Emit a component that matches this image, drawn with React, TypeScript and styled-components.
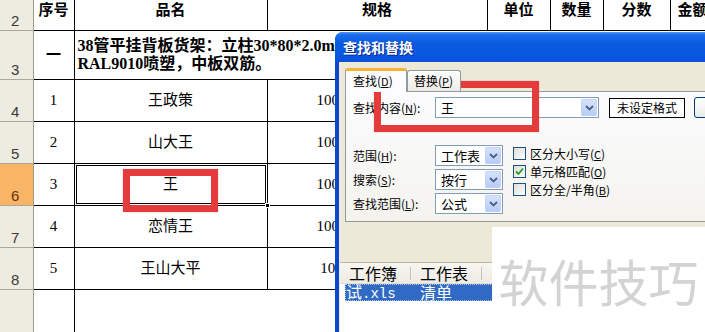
import React from "react";
import styled, { createGlobalStyle } from "styled-components";

const GlobalStyle = createGlobalStyle`
  html, body { margin: 0; padding: 0; background: #fff; }
  body { overflow: hidden; }
`;

const Page = styled.div`
  position: relative;
  width: 705px;
  height: 332px;
  overflow: hidden;
  background: #fff;
`;

/* ---------- spreadsheet ---------- */

const Sheet = styled.table`
  border-collapse: collapse;
  table-layout: fixed;
  width: 775px;
  font-family: "Liberation Serif", "Noto Sans CJK SC", serif;
  color: #000;
`;

const Col = styled.col<{ $w: number }>`
  width: ${(p) => p.$w}px;
`;

const Row = styled.tr<{ $h: number }>`
  height: ${(p) => p.$h}px;
`;

const RowHead = styled.th<{ $active?: boolean }>`
  padding: 0 0 1px 11px;
  text-align: left;
  vertical-align: bottom;
  font: 400 15px/16px "Liberation Sans", sans-serif;
  color: ${(p) => (p.$active ? "#6b3210" : "#3a3a3a")};
  background: ${(p) => (p.$active ? "#F8B566" : "#EEECE1")};
  border-right: 1px solid #9d9b8e;
  border-bottom: 1px solid #aaa898;
`;

const HeadCell = styled.td`
  border: 1px solid #000;
  border-top: none;
  padding: 0;
  text-align: center;
  vertical-align: top;
  font-family: "Noto Sans CJK SC", sans-serif;
  font-weight: 700;
  font-size: 15px;
  line-height: 18px;
  white-space: nowrap;
  overflow: hidden;
`;

const Cell = styled.td<{ $selected?: boolean; $bold?: boolean }>`
  position: relative;
  border: 1px solid #000;
  padding: 0;
  text-align: center;
  vertical-align: middle;
  font-size: 15px;
  line-height: 18px;
  font-weight: ${(p) => (p.$bold ? 700 : 400)};
  white-space: nowrap;
  overflow: ${(p) => (p.$selected ? "visible" : "hidden")};
  box-shadow: ${(p) =>
    p.$selected ? "inset 0 0 0 1px #fff, inset 0 0 0 2px #000" : "none"};
  &::after {
    content: "";
    display: ${(p) => (p.$selected ? "block" : "none")};
    position: absolute;
    right: -3px;
    bottom: -3px;
    width: 5px;
    height: 5px;
    background: #000;
    border: 1px solid #fff;
    box-sizing: border-box;
  }
`;

const TitleCell = styled.td`
  border: 1px solid #000;
  padding: 0 0 0 3px;
  text-align: left;
  vertical-align: middle;
  font-family: "Liberation Serif", "Noto Sans CJK SC", serif;
  font-weight: 700;
  font-size: 16px;
  line-height: 18px;
  white-space: nowrap;
  overflow: hidden;
`;

const BlankCell = styled.td`
  border: 1px solid #000;
  padding: 0;
`;

/* ---------- dialog ---------- */

const Dialog = styled.div`
  position: absolute;
  left: 335px;
  top: 32px;
  width: 420px;
  height: 312px;
  display: flex;
  flex-direction: column;
  background: #0A47CF;
  border-radius: 8px 8px 0 0;
  overflow: hidden;
  font-family: "Noto Sans CJK SC", "Liberation Sans", sans-serif;
  font-size: 12px;
  color: #000;
`;

const TitleBar = styled.div`
  height: 30px;
  flex: none;
  display: flex;
  align-items: center;
  padding-left: 8px;
  background: linear-gradient(
    #4a97f8 0%,
    #1b6bea 10%,
    #0a5ae0 40%,
    #0858e2 75%,
    #0b4fd6 100%
  );
  color: #fff;
  font-weight: 700;
  font-size: 14px;
  text-shadow: 1px 1px 0 #0c2a8a;
`;

const Body = styled.div`
  flex: 1;
  margin-left: 4px;
  background: #ECE9D8;
  display: flex;
  flex-direction: column;
  padding-top: 6px;
`;

const Tabs = styled.div`
  display: flex;
  align-items: flex-end;
  height: 23px;
  margin-left: 6px;
  position: relative;
  z-index: 1;
`;

const Tab = styled.div<{ $active?: boolean }>`
  box-sizing: border-box;
  width: ${(p) => (p.$active ? 62 : 54)}px;
  height: ${(p) => (p.$active ? 24 : 21)}px;
  margin-bottom: ${(p) => (p.$active ? -1 : 0)}px;
  padding: ${(p) => (p.$active ? "1px 0 0 7px" : "1px 0 0 6px")};
  border: 1px solid #919B9C;
  border-bottom: none;
  border-top: ${(p) => (p.$active ? "3px solid #F7B338" : "1px solid #919B9C")};
  border-radius: 3px 3px 0 0;
  background: ${(p) =>
    p.$active ? "#FCFCFE" : "linear-gradient(#ffffff, #ECEBE6)"};
  font-size: 12px;
  line-height: 18px;
  white-space: nowrap;
`;

const Panel = styled.div`
  box-sizing: border-box;
  width: 400px;
  height: 131px;
  margin-left: 6px;
  border: 1px solid #919B9C;
  background: linear-gradient(#FCFCFE, #F4F3EE);
  padding: 5px 0 0 7px;
`;

const FieldRow = styled.div`
  display: flex;
  align-items: center;
  height: 21px;
`;

const Label = styled.span`
  width: 82px;
  flex: none;
  white-space: nowrap;
`;

const Key = styled.span`
  text-decoration: underline;
  font-size: 11px;
`;

const Combo = styled.div<{ $w: number }>`
  box-sizing: border-box;
  width: ${(p) => p.$w}px;
  height: 21px;
  flex: none;
  display: flex;
  align-items: center;
  border: 1px solid #7F9DB9;
  background: #fff;
  padding: 1px;
`;

const ComboText = styled.span`
  flex: 1;
  padding-left: 4px;
  font-size: 13px;
  line-height: 17px;
  white-space: nowrap;
`;

const DropBtn = styled.span`
  width: 16px;
  height: 17px;
  flex: none;
  display: flex;
  align-items: center;
  justify-content: center;
  border-radius: 2px;
  background: linear-gradient(#D8E4FC, #B6CAF5);
  box-shadow: inset 0 0 0 1px #C3D3FD;
`;

const FmtButton = styled.div`
  box-sizing: border-box;
  margin-left: 10px;
  width: 76px;
  height: 20px;
  flex: none;
  border: 1px solid #000;
  background: #fff;
  display: flex;
  align-items: center;
  justify-content: center;
  font-size: 12px;
`;

const XpButton = styled.div`
  box-sizing: border-box;
  margin-left: 9px;
  width: 80px;
  height: 21px;
  flex: none;
  border: 1px solid #003C74;
  border-radius: 3px;
  background: linear-gradient(#ffffff, #ECEBE6);
`;

const Options = styled.div`
  display: flex;
  margin-top: 27px;
`;

const OptCol = styled.div`
  display: flex;
  flex-direction: column;
  gap: 3px;
`;

const CheckCol = styled.div`
  display: flex;
  flex-direction: column;
  gap: 5px;
  margin-left: 10px;
  padding-top: 2px;
`;

const CheckRow = styled.div`
  display: flex;
  align-items: center;
  height: 13px;
  gap: 4px;
  white-space: nowrap;
`;

const Box = styled.span`
  box-sizing: border-box;
  width: 13px;
  height: 13px;
  flex: none;
  border: 1px solid #1C5180;
  background: linear-gradient(135deg, #DCDCD7, #ffffff);
  display: flex;
  align-items: center;
  justify-content: center;
`;

const ResultList = styled.div`
  flex: 1;
  margin-top: 40px;
  margin-left: 1px;
  background: #fff;
  border-top: 1px solid #B9B6A6;
  display: flex;
  flex-direction: column;
  font-size: 16px;
`;

const ListHeader = styled.div`
  height: 20px;
  display: flex;
  align-items: center;
  background: linear-gradient(#F7F6F1, #EDEBE2);
  border-bottom: 1px solid #E0DDCF;
`;

const HeaderCol = styled.div<{ $w: number }>`
  position: relative;
  width: ${(p) => p.$w}px;
  flex: none;
  padding-left: 9px;
  box-sizing: border-box;
  line-height: 20px;
  color: #000;
  &::after {
    content: "";
    position: absolute;
    right: 0;
    top: 4px;
    bottom: 3px;
    width: 1px;
    background: #C7C5B2;
  }
`;

const SelRow = styled.div`
  height: 17px;
  margin-left: 5px;
  display: flex;
  align-items: center;
  background: #316AC5;
  color: #fff;
  outline: 1px dotted #a9c1ea;
  outline-offset: -1px;
`;

const SelCol = styled.div<{ $w: number }>`
  width: ${(p) => p.$w}px;
  flex: none;
  padding-left: 1px;
  line-height: 17px;
  white-space: nowrap;
`;

const Mono = styled.span`
  font-family: "Liberation Mono", monospace;
  font-size: 14px;
`;

/* ---------- overlays ---------- */

const Watermark = styled.div`
  position: absolute;
  left: 492px;
  top: 227px;
  width: 213px;
  height: 105px;
  background: #fff;
  display: flex;
  align-items: center;
  justify-content: center;
  font-family: "Noto Sans CJK SC", sans-serif;
  font-size: 50px;
  font-weight: 400;
  color: #D3D3D3;
  white-space: nowrap;
`;

const Mark = styled.div<{ $x: number; $y: number; $w: number; $h: number }>`
  position: absolute;
  left: ${(p) => p.$x}px;
  top: ${(p) => p.$y}px;
  width: ${(p) => p.$w}px;
  height: ${(p) => p.$h}px;
  box-sizing: border-box;
  border: 7px solid #E43C3C;
  box-shadow: 0 0 1px rgba(228, 60, 60, 0.6);
`;

const Chevron = () => (
  <svg width="9" height="6" viewBox="0 0 9 6">
    <polyline
      points="1,1 4.5,4.5 8,1"
      fill="none"
      stroke="#4D6185"
      strokeWidth="1.8"
    />
  </svg>
);

const Check = () => (
  <svg width="9" height="9" viewBox="0 0 9 9">
    <polyline
      points="1,4.5 3.5,7 8,1.5"
      fill="none"
      stroke="#21A121"
      strokeWidth="1.8"
    />
  </svg>
);

const items = [
  { no: "1", name: "王政策", spec: "1000*600*2000mm" },
  { no: "2", name: "山大王", spec: "1000*600*2000mm" },
  { no: "3", name: "王", spec: "1000*600*2000mm", sel: true },
  { no: "4", name: "恋情王", spec: "1000*600*2000mm" },
  { no: "5", name: "王山大平", spec: "1000*600*200mm" },
];

export default function App() {
  return (
    <Page>
      <GlobalStyle />
      <Sheet>
        <colgroup>
          <Col $w={33} />
          <Col $w={41} />
          <Col $w={193} />
          <Col $w={220} />
          <Col $w={63} />
          <Col $w={53} />
          <Col $w={67} />
          <Col $w={45} />
          <Col $w={60} />
        </colgroup>
        <tbody>
          <Row $h={30}>
            <RowHead>2</RowHead>
            <HeadCell>序号</HeadCell>
            <HeadCell>品名</HeadCell>
            <HeadCell>规格</HeadCell>
            <HeadCell>单位</HeadCell>
            <HeadCell>数量</HeadCell>
            <HeadCell>分数</HeadCell>
            <HeadCell>金额</HeadCell>
            <HeadCell />
          </Row>
          <Row $h={49}>
            <RowHead>3</RowHead>
            <Cell $bold>一</Cell>
            <TitleCell colSpan={7}>
              38管平挂背板货架：立柱30*80*2.0mm，层板1.0mm
              <br />
              RAL9010喷塑，中板双筋。
            </TitleCell>
          </Row>
          {items.map((it, i) => (
            <Row key={it.no} $h={42}>
              <RowHead $active={it.sel}>{i + 4}</RowHead>
              <Cell>{it.no}</Cell>
              <Cell $selected={it.sel}>{it.name}</Cell>
              <Cell>{it.spec}</Cell>
              <Cell>套</Cell>
              <Cell />
              <Cell />
              <Cell />
              <Cell />
            </Row>
          ))}
          <Row $h={60}>
            <RowHead>9</RowHead>
            <BlankCell />
            <BlankCell colSpan={7} />
          </Row>
        </tbody>
      </Sheet>

      <Dialog>
        <TitleBar>查找和替换</TitleBar>
        <Body>
          <Tabs>
            <Tab $active>
              查找(<Key>D</Key>)
            </Tab>
            <Tab>
              替换(<Key>P</Key>)
            </Tab>
          </Tabs>
          <Panel>
            <FieldRow>
              <Label>
                查找内容(<Key>N</Key>):
              </Label>
              <Combo $w={164}>
                <ComboText>王</ComboText>
                <DropBtn>
                  <Chevron />
                </DropBtn>
              </Combo>
              <FmtButton>未设定格式</FmtButton>
              <XpButton />
            </FieldRow>
            <Options>
              <OptCol>
                <FieldRow>
                  <Label>
                    范围(<Key>H</Key>):
                  </Label>
                  <Combo $w={68}>
                    <ComboText>工作表</ComboText>
                    <DropBtn>
                      <Chevron />
                    </DropBtn>
                  </Combo>
                </FieldRow>
                <FieldRow>
                  <Label>
                    搜索(<Key>S</Key>):
                  </Label>
                  <Combo $w={68}>
                    <ComboText>按行</ComboText>
                    <DropBtn>
                      <Chevron />
                    </DropBtn>
                  </Combo>
                </FieldRow>
                <FieldRow>
                  <Label>
                    查找范围(<Key>L</Key>):
                  </Label>
                  <Combo $w={68}>
                    <ComboText>公式</ComboText>
                    <DropBtn>
                      <Chevron />
                    </DropBtn>
                  </Combo>
                </FieldRow>
              </OptCol>
              <CheckCol>
                <CheckRow>
                  <Box />
                  <span>
                    区分大小写(<Key>C</Key>)
                  </span>
                </CheckRow>
                <CheckRow>
                  <Box>
                    <Check />
                  </Box>
                  <span>
                    单元格匹配(<Key>O</Key>)
                  </span>
                </CheckRow>
                <CheckRow>
                  <Box />
                  <span>
                    区分全/半角(<Key>B</Key>)
                  </span>
                </CheckRow>
              </CheckCol>
            </Options>
          </Panel>
          <ResultList>
            <ListHeader>
              <HeaderCol $w={71}>工作簿</HeaderCol>
              <HeaderCol $w={71}>工作表</HeaderCol>
              <HeaderCol $w={80}>名称</HeaderCol>
            </ListHeader>
            <SelRow>
              <SelCol $w={73}>
                试<Mono>.xls</Mono>
              </SelCol>
              <SelCol $w={80}>清单</SelCol>
            </SelRow>
          </ResultList>
        </Body>
      </Dialog>

      <Mark $x={123} $y={169} $w={95} $h={43} />
      <Mark $x={374} $y={81} $w={165} $h={51} />
      <Watermark>软件技巧</Watermark>
    </Page>
  );
}
